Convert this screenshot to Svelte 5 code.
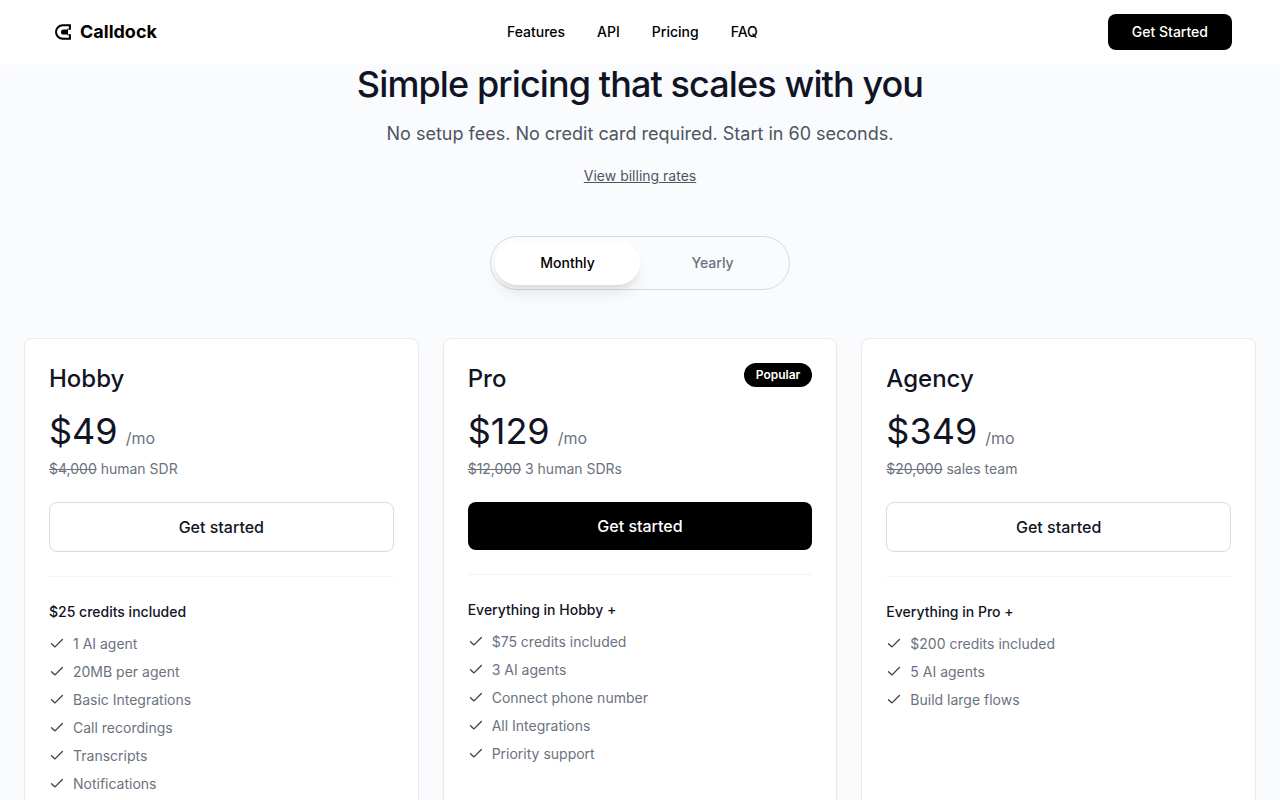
<script>
  let billing = 'monthly'

  const links = [
    { label: 'Features', href: '#features' },
    { label: 'API', href: '#api' },
    { label: 'Pricing', href: '#pricing' },
    { label: 'FAQ', href: '#faq' }
  ]

  const plans = [
    {
      name: 'Hobby',
      price: '$49',
      was: '$4,000',
      compare: 'human SDR',
      heading: '$25 credits included',
      features: [
        '1 AI agent',
        '20MB per agent',
        'Basic Integrations',
        'Call recordings',
        'Transcripts',
        'Notifications'
      ]
    },
    {
      name: 'Pro',
      price: '$129',
      was: '$12,000',
      compare: '3 human SDRs',
      popular: true,
      heading: 'Everything in Hobby +',
      features: [
        '$75 credits included',
        '3 AI agents',
        'Connect phone number',
        'All Integrations',
        'Priority support'
      ]
    },
    {
      name: 'Agency',
      price: '$349',
      was: '$20,000',
      compare: 'sales team',
      heading: 'Everything in Pro +',
      features: ['$200 credits included', '5 AI agents', 'Build large flows']
    }
  ]
</script>

<header class="header">
  <a class="brand" href="#top">
    <svg class="brand-mark" viewBox="0 0 16 16" aria-hidden="true">
      <path d="M14.9 5.6V1.2H7.8a6.8 6.8 0 0 0 0 13.6h7.1v-4.4" fill="none" stroke="currentColor" stroke-width="2" />
      <path d="M15.8 5.2H12M15.8 10.8H12" fill="none" stroke="currentColor" stroke-width="0.8" />
      <path d="M8.6 5.4H13v5.2H8.6a2.6 2.6 0 0 1 0-5.2Z" fill="currentColor" />
    </svg>
    <span>Calldock</span>
  </a>
  <nav class="nav">
    {#each links as link}
      <a href={link.href}>{link.label}</a>
    {/each}
  </nav>
  <button class="cta" type="button">Get Started</button>
</header>

<main class="pricing">
  <div class="intro">
    <h1>Simple pricing that scales with you</h1>
    <p>No setup fees. No credit card required. Start in 60 seconds.</p>
    <a class="rates" href="#rates">View billing rates</a>
  </div>

  <div class="toggle" role="group" aria-label="Billing period">
    <button
      type="button"
      class:active={billing === 'monthly'}
      aria-pressed={billing === 'monthly'}
      on:click={() => (billing = 'monthly')}
    >
      Monthly
    </button>
    <button
      type="button"
      class:active={billing === 'yearly'}
      aria-pressed={billing === 'yearly'}
      on:click={() => (billing = 'yearly')}
    >
      Yearly
    </button>
  </div>

  <div class="plans">
    {#each plans as plan}
      <section class="plan">
        <div class="plan-top">
          <h2>{plan.name}</h2>
          {#if plan.popular}
            <span class="badge">Popular</span>
          {/if}
        </div>
        <div class="price">
          <span class="amount">{plan.price}</span>
          <span class="period">/mo</span>
        </div>
        <p class="compare"><s>{plan.was}</s> {plan.compare}</p>
        <button class={`start ${plan.popular ? 'start--solid' : ''}`} type="button">Get started</button>
        <hr />
        <h3>{plan.heading}</h3>
        <ul>
          {#each plan.features as feature}
            <li>
              <svg viewBox="0 0 16 16" aria-hidden="true">
                <path d="M2.5 7.7 6 10.9 13.4 3.5" />
              </svg>
              <span>{feature}</span>
            </li>
          {/each}
        </ul>
      </section>
    {/each}
  </div>
</main>

<style>
  :global(body) {
    margin: 0;
    background: #fafbfd;
    color: #111424;
    font-family: Inter, 'Liberation Sans', sans-serif;
    font-size: 14px;
    line-height: 20px;
  }

  h1,
  h2,
  h3,
  p,
  ul {
    margin: 0;
    padding: 0;
    font-weight: 500;
  }

  a {
    color: inherit;
    text-decoration: none;
  }

  button {
    font: inherit;
    font-weight: 500;
    cursor: pointer;
  }

  .header {
    position: sticky;
    top: 0;
    z-index: 10;
    display: flex;
    align-items: center;
    justify-content: space-between;
    height: 64px;
    padding: 0 48px;
    background: #fff;
    box-shadow: 0 1px 2px rgba(255, 255, 255, 0.8);
    color: #000;
  }

  .brand {
    display: flex;
    align-items: center;
    gap: 9px;
    padding-left: 7px;
    font-size: 18px;
    font-weight: 700;
  }

  .brand-mark {
    width: 16px;
    height: 16px;
  }

  .nav {
    display: flex;
    gap: 32px;
    font-weight: 500;
  }

  .cta {
    padding: 8px 24px;
    border: 0;
    border-radius: 8px;
    background: #000;
    color: #fff;
  }

  .pricing {
    display: flex;
    flex-direction: column;
    align-items: center;
    padding: 0 24px 48px;
  }

  .intro {
    display: flex;
    flex-direction: column;
    align-items: center;
    text-align: center;
  }

  .intro h1 {
    font-size: 36px;
    line-height: 40px;
    letter-spacing: -0.025em;
  }

  .intro p {
    margin-top: 16px;
    color: #4b5563;
    font-size: 18px;
    font-weight: 400;
    line-height: 28px;
  }

  .rates {
    margin-top: 18px;
    color: #4b5563;
    text-decoration: underline;
  }

  .toggle {
    display: grid;
    grid-template-columns: 1fr 1fr;
    box-sizing: border-box;
    width: 300px;
    margin-top: 50px;
    padding: 4px;
    border: 1px solid #d8dadd;
    border-radius: 999px;
  }

  .toggle button {
    padding: 12px 16px;
    border: 0;
    border-radius: 999px;
    background: transparent;
    color: #6b7280;
  }

  .toggle .active {
    background: #fff;
    box-shadow: 0 10px 15px -3px rgba(0, 0, 0, 0.1), 0 4px 6px -4px rgba(0, 0, 0, 0.1);
    color: #000;
  }

  .plans {
    display: grid;
    grid-template-columns: repeat(3, 1fr);
    gap: 24px;
    width: 100%;
    margin-top: 48px;
  }

  .plan {
    padding: 24px;
    border: 1px solid #e8eaed;
    border-radius: 8px;
    background: #fff;
    box-shadow: 0 1px 2px rgba(0, 0, 0, 0.04);
  }

  .plan-top {
    display: flex;
    align-items: flex-start;
    justify-content: space-between;
  }

  h2 {
    font-size: 24px;
    line-height: 32px;
  }

  .badge {
    padding: 4px 12px;
    border-radius: 999px;
    background: #000;
    color: #fff;
    font-size: 12px;
    font-weight: 600;
    line-height: 16px;
  }

  .price {
    display: flex;
    align-items: baseline;
    gap: 8px;
    margin-top: 16px;
  }

  .amount {
    font-size: 36px;
    font-weight: 400;
    line-height: 40px;
  }

  .period {
    color: #6b7280;
    font-size: 16px;
  }

  .compare {
    margin-top: 8px;
    color: #6b7280;
    font-weight: 400;
  }

  .start {
    width: 100%;
    margin-top: 23px;
    padding: 12px 24px;
    border: 1px solid #d8dadd;
    border-radius: 8px;
    background: #fff;
    color: inherit;
    font-size: 16px;
    line-height: 24px;
  }

  .start--solid {
    border: 0;
    background: #000;
    color: #fff;
  }

  hr {
    height: 1px;
    margin: 24px 0 25px;
    border: 0;
    background: #f3f4f6;
  }

  h3 {
    font-size: 14px;
    line-height: 20px;
  }

  ul {
    display: flex;
    flex-direction: column;
    gap: 8px;
    margin-top: 12px;
    list-style: none;
  }

  li {
    display: flex;
    align-items: center;
    gap: 8px;
    color: #6b7280;
    font-weight: 400;
  }

  li svg {
    width: 16px;
    height: 16px;
    fill: none;
    stroke: #3f3f46;
    stroke-width: 1.3;
    stroke-linecap: round;
    stroke-linejoin: round;
  }
</style>
